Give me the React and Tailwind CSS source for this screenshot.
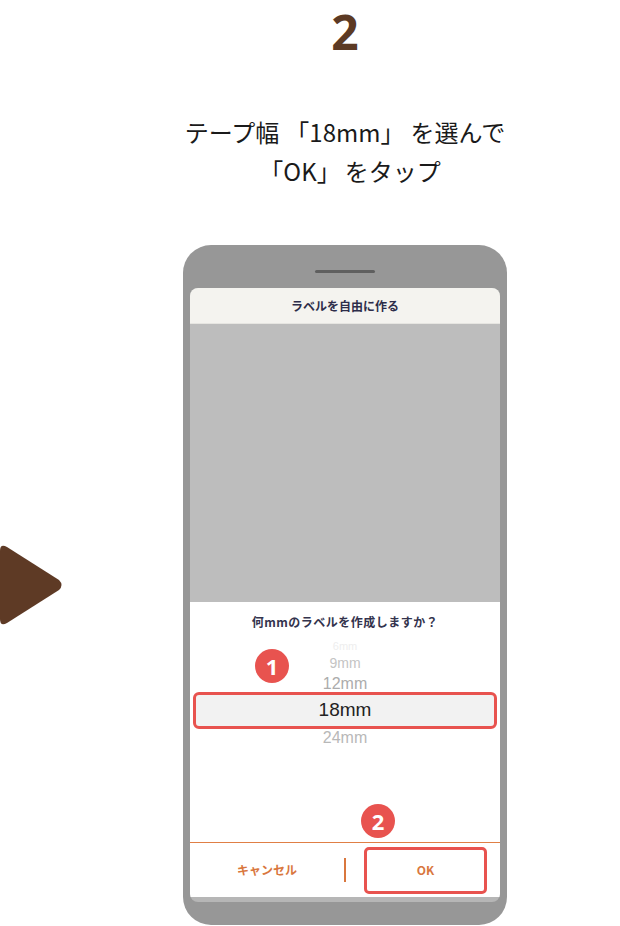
import React from 'react';

const jp = { fontFamily: '"Noto Sans CJK JP", "Noto Sans", sans-serif' };
const latin = { fontFamily: '"Liberation Sans", Arial, sans-serif' };

function Badge({ n, className }) {
  return (
    <div
      className={`absolute w-[34px] h-[34px] rounded-full bg-[#e8534f] text-white flex items-center justify-center text-[22px] font-bold leading-none ${className}`}
      style={{ fontFamily: '"Noto Sans", sans-serif' }}
    >
      {n}
    </div>
  );
}

export default function App() {
  return (
    <div className="w-[620px] h-[926px] bg-white overflow-hidden flex flex-col" style={jp}>
      {/* Step heading */}
      <div className="flex">
        <div className="w-[70px]" />
        <div className="w-[550px] flex flex-col items-center">
          <div className="text-[48px] font-bold text-[#5c3a24] leading-none mt-[8px] h-[52px]" style={{ fontFamily: '"Noto Sans", sans-serif' }}>
            2
          </div>
          <p className="mt-[52px] text-center text-[24px] leading-[39px] text-[#1a1a1a]">
            テープ幅<span className="ml-[6px]">「18mm」</span><span className="ml-[6px]">を選んで</span>
            <br />
            <span className="ml-[10px]">「OK」</span><span className="ml-[4px]">をタップ</span>
          </p>
        </div>
      </div>

      <div className="flex items-center mt-[55px]">
        {/* Arrow */}
        <div className="w-[70px] flex">
          <svg width="64" height="84" viewBox="0 0 64 84">
            <path d="M0 8 Q0 0 7 4 L59 37 Q64 42 59 47 L7 80 Q0 84 0 76 Z" fill="#5e3a25" />
          </svg>
        </div>

        {/* Phone */}
        <div className="w-[550px] flex justify-center">
          <div className="w-[324px] h-[680px] bg-[#979797] rounded-[28px] px-[7px] pb-[23px] flex flex-col">
            <div className="h-[43px] flex items-center justify-center pt-[9px]">
              <div className="w-[60px] h-[3px] rounded-full bg-[#5f5f5f]" />
            </div>
            <div className="relative flex-1 flex flex-col rounded-[8px] overflow-hidden bg-[#b6b6b6] pb-[5px]">
              {/* Header */}
              <div className="h-[36px] bg-[#f4f3ef] border-b border-[#e6e5e1] flex items-center justify-center text-[12px] font-bold text-[#2d2d4a]">
                ラベルを自由に作る
              </div>
              {/* Preview */}
              <div className="h-[278px] bg-[#bdbdbd]" />
              {/* Sheet */}
              <div className="relative flex-1 bg-white flex flex-col">
                <div className="h-[40px] flex items-center justify-center text-[12px] font-bold text-[#33334d] tracking-[0.5px]">
                  何mmのラベルを作成しますか？
                </div>
                <div className="flex flex-col items-center" style={latin}>
                  <div className="h-[9px] flex items-start text-[11px] leading-[9px] text-[#eeeeee]">6mm</div>
                  <div className="h-[24px] flex items-center text-[14px] text-[#c4c4c4]">9mm</div>
                  <div className="h-[17px] flex items-center text-[16px] text-[#acacac]">12mm</div>
                </div>
                <div className="mx-[3px] h-[37px] rounded-[6px] border-[3px] border-[#e8534f] bg-[#f2f2f2] flex items-center justify-center text-[19px] text-[#222]" style={latin}>
                  18mm
                </div>
                <div className="h-[17px] flex items-center justify-center text-[16px] text-[#b8b8b8]" style={latin}>
                  24mm
                </div>
                <div className="flex-1" />
                {/* Buttons */}
                <div className="h-[55px] border-t border-[#e07f45] flex items-center">
                  <div className="w-[154px] flex items-center justify-center text-[12px] font-bold text-[#d9773e]">
                    キャンセル
                  </div>
                  <div className="w-[2px] h-[24px] bg-[#d9773e]" />
                  <div className="w-[154px] flex items-center pl-[18px] pr-[13px]">
                    <div className="flex-1 h-[47px] rounded-[5px] border-[3px] border-[#e8534f] flex items-center justify-center text-[12px] font-bold text-[#d9773e]">
                      OK
                    </div>
                  </div>
                </div>
                <Badge n="1" className="left-[65px] top-[47px]" />
                <Badge n="2" className="left-[171px] top-[202px]" />
              </div>
            </div>
          </div>
        </div>
      </div>
    </div>
  );
}
